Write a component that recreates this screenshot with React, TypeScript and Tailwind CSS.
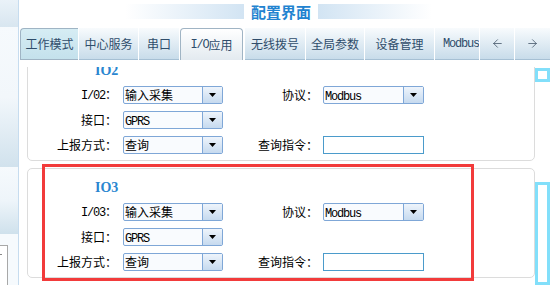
import { ArrowLeft, ArrowRight } from "lucide-react";

function Lat({ children }: { children: React.ReactNode }) {
  return <span className="font-['Liberation_Mono',monospace] tracking-[-1.2px]">{children}</span>;
}

function Select({ value, latin = false, wide = false }: { value: string; latin?: boolean; wide?: boolean }) {
  return (
    <div className={`flex h-[18px] ${wide ? "w-[101px]" : "w-[100px]"} rounded-[2px] border border-[#7fa7d7] bg-[#f9fbfe]`}>
      <div className="flex-1 overflow-hidden whitespace-nowrap pl-[1px] text-[12px] leading-[16px] text-black">
        {latin ? <Lat>{value}</Lat> : value}
      </div>
      <div className="flex w-[20px] items-center justify-center border-l border-[#7fa7d7] bg-gradient-to-b from-[#eef4fb] to-[#c6daef]">
        <svg width="7" height="4" viewBox="0 0 7 4">
          <path d="M0 0H7L3.5 4Z" fill="#000" />
        </svg>
      </div>
    </div>
  );
}

function Box({ n }: { n: string }) {
  return (
    <div className="h-[110px] w-[508px] shrink-0 rounded-[5px] border border-[#dcdcdc] pt-[11px]">
      <div className="h-[16px] pl-[67px] font-['Liberation_Serif',serif] text-[14px] font-bold leading-[16px] text-[#2a86d0]">
        IO{n}
      </div>
      <div className="mt-[7px] flex flex-col gap-[7px] text-[12px] text-black">
        <div className="flex h-[18px] items-center">
          <div className="w-[89px] text-right leading-[18px]">
            <Lat>I/0{n}</Lat>：
          </div>
          <div className="ml-[6px]">
            <Select value="输入采集" />
          </div>
          <div className="w-[95px] text-right leading-[18px]">协议：</div>
          <div className="ml-[5px]">
            <Select value="Modbus" latin wide />
          </div>
        </div>
        <div className="flex h-[18px] items-center">
          <div className="w-[89px] text-right leading-[18px]">接口：</div>
          <div className="ml-[6px]">
            <Select value="GPRS" latin />
          </div>
        </div>
        <div className="flex h-[18px] items-center">
          <div className="w-[89px] text-right leading-[18px]">上报方式：</div>
          <div className="ml-[6px]">
            <Select value="查询" />
          </div>
          <div className="w-[95px] text-right leading-[18px]">查询指令：</div>
          <div className="ml-[5px] h-[18px] w-[101px] border border-[#4b9bcb] bg-white" />
        </div>
      </div>
    </div>
  );
}

const inactive =
  "flex h-[32px] shrink-0 items-center justify-center border-b border-[#a6c0d4] bg-gradient-to-b from-[#f8fbfd] to-[#c8dcea] text-[#2f4d6b]";

export default function App() {
  return (
    <div className="relative flex h-[285px] w-[550px] overflow-hidden bg-white font-['Noto_Sans_CJK_SC',sans-serif]">
      {/* sidebar */}
      <div className="flex h-full w-[19px] shrink-0 flex-col border-r border-[#c6dcef]">
        <div className="h-[28px] bg-gradient-to-b from-[#eaf2f8] to-[#d8e6f0]" />
        <div className="h-[147px] bg-gradient-to-b from-[#f6fafd] via-[#f2f7fb] to-[#d1e2ed]" />
        <div className="h-[70px] bg-gradient-to-b from-[#f6fafd] via-[#eef5fa] to-[#cfe1ec]" />
        <div className="flex-1 bg-[#f6fafd] pt-[11px]">
          <div className="h-[40px] w-[8px] border-r border-t border-[#a8a8a8] bg-white">
            <div className="mt-[8px] h-[1px] w-[2px] bg-[#888]" />
          </div>
        </div>
      </div>

      {/* main */}
      <div className="flex w-[531px] flex-col">
        {/* header */}
        <div className="flex h-[28px] items-start pl-[106px] pt-[4px]">
          <div className="h-[15px] w-[119px] bg-gradient-to-r from-[#ffffff] to-[#d2e4f3]" />
          <div className="w-[74px] pl-[7px] text-[15px] font-bold leading-[15px] text-[#2283d0]">配置界面</div>
          <div className="h-[15px] w-[114px] bg-gradient-to-r from-[#d2e4f3] to-[#ffffff]" />
        </div>

        {/* tabs */}
        <div className="flex h-[32px] pl-[1px] text-[12px]">
          <div className="flex h-[32px] w-[58px] shrink-0 items-center justify-center rounded-tl-[4px] border-l border-t border-b border-[#9fb4c4] bg-gradient-to-b from-[#d6edf4] to-[#c4e1ec] text-[#2f4d6b]">
            工作模式
          </div>
          <div className={`${inactive} ml-[1px] w-[59px]`}>中心服务</div>
          <div className={`${inactive} ml-[1px] w-[40px]`}>串口</div>
          <div className="ml-[1px] flex h-[32px] w-[63px] shrink-0 items-center justify-center rounded-t-[4px] border border-b-0 border-[#a0b4c4] bg-gradient-to-b from-[#ffffff] to-[#e3eaf0] text-[#2f4d6b]">
            <Lat>I/O</Lat>应用
          </div>
          <div className={`${inactive} ml-[2px] w-[60px]`}>无线拨号</div>
          <div className={`${inactive} ml-[1px] w-[58px]`}>全局参数</div>
          <div className={`${inactive} ml-[1px] w-[69px]`}>设备管理</div>
          <div className="ml-[1px] flex h-[32px] w-[44px] shrink-0 items-center overflow-hidden whitespace-nowrap border-b border-[#a6c0d4] bg-gradient-to-b from-[#f8fbfd] to-[#c8dcea] pl-[8px] text-[#2f4d6b]">
            <Lat>Modbus</Lat>
          </div>
          <div className={`${inactive} ml-[1px] w-[34px]`}>
            <ArrowLeft size={13} strokeWidth={1.4} color="#3d4f63" />
          </div>
          <div className={`${inactive} ml-[1px] w-[35px]`}>
            <ArrowRight size={13} strokeWidth={1.4} color="#3d4f63" />
          </div>
        </div>

        {/* content */}
        <div className="flex-1 pt-[7px]">
          <div className="flex h-[218px] overflow-hidden">
            <div className="-mt-[16px] flex flex-col gap-[7px] pl-[8px]">
              <Box n="2" />
              <Box n="3" />
            </div>
            <div className="flex w-[15px] flex-col">
              <div className="mt-[1px] h-[15px] w-[15px] border-[3px] border-[#82dffa]" />
              <div className="mt-[100px] h-[120px] w-[15px] border-[3px] border-[#82dffa]" />
            </div>
          </div>
        </div>
      </div>

      {/* annotation */}
      <div className="pointer-events-none absolute left-[42px] top-[164px] h-[117px] w-[432px] border-[3px] border-[#f23b3b]" />
    </div>
  );
}
